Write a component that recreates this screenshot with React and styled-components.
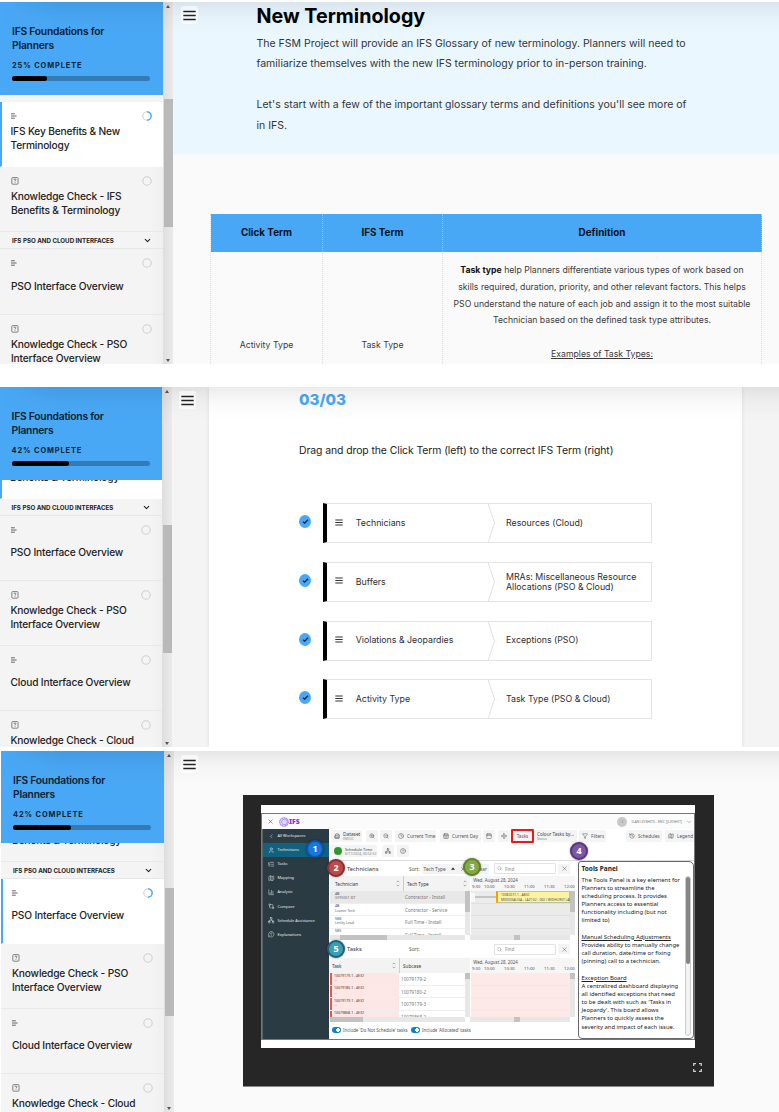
import React from "react";
import styled, { createGlobalStyle } from "styled-components";
import {
  X, ChevronDown, ChevronLeft, User, ListTree, Map as MapIcon, ChartColumn, GitCompare, Network,
  MessageCircleQuestion, ZoomIn, ZoomOut, Clock, CalendarDays, Calendar, Move, Funnel, Search,
  Building2, CircleQuestionMark, History,
} from "lucide-react";

const Global = createGlobalStyle`
  *, *::before, *::after { box-sizing: border-box; }
  body { margin: 0; background: #fff; font-family: Inter, "Liberation Sans", sans-serif; color: #111; }
  p, h1, h2, h3 { margin: 0; }
  svg { display: block; flex: none; }
`;

const BLUE = "#49a8f5";

const Page = styled.main`
  width: 779px;
  height: 1112px;
  overflow: hidden;
  padding-top: 2px;
`;

const Panel = styled.section`
  position: relative;
  display: flex;
  height: ${(p) => p.$h}px;
  margin-left: ${(p) => p.$left || 0}px;
  margin-bottom: ${(p) => p.$gap || 0}px;
  overflow: hidden;
  &::after {
    content: "";
    position: absolute;
    inset: 0 0 auto 0;
    height: 32px;
    pointer-events: none;
    background: linear-gradient(rgba(0, 0, 0, 0.075), rgba(0, 0, 0, 0.025) 45%, transparent);
    mask-image: linear-gradient(90deg, transparent, #000 60px);
  }
`;

/* ---------- course sidebar ---------- */

const SidebarBox = styled.aside`
  flex: none;
  width: ${(p) => p.$w}px;
  display: flex;
  flex-direction: column;
  background: #f4f4f4;
`;

const CourseHeader = styled.header`
  flex: none;
  height: ${(p) => p.$h}px;
  padding: 22px 0 0 ${(p) => p.$pad}px;
  background: ${BLUE};
`;

const CourseTitle = styled.h2`
  font-size: 10.3px;
  line-height: 14px;
  font-weight: 600;
  letter-spacing: -0.22px;
  color: #0d2233;
`;

const Complete = styled.p`
  margin-top: 9px;
  font-size: 7.4px;
  line-height: 9px;
  font-weight: 700;
  letter-spacing: 0.9px;
  color: #0d2233;
`;

const Track = styled.div`
  width: 138px;
  height: 5px;
  margin-top: ${(p) => p.$mt}px;
  border-radius: 3px;
  background: #357bb3;
`;

const Bar = styled.div`
  width: ${(p) => p.$v}%;
  height: 100%;
  border-radius: 3px;
  background: #000;
`;

const LessonScroll = styled.div`
  flex: 1;
  overflow: hidden;
`;

const LessonList = styled.div`
  margin-top: ${(p) => p.$shift}px;
  background: linear-gradient(90deg, transparent 150px, rgba(0, 0, 0, 0.02));
`;

const Lesson = styled.div`
  height: 65.2px;
  padding: 9px 11px 0 ${(p) => (p.$active ? p.$pad - 3.5 : p.$pad - 1)}px;
  background: ${(p) => (p.$active ? "#fff" : "transparent")};
  border-left: ${(p) => (p.$active ? `2.5px solid ${BLUE}` : "0")};
  border-bottom: 1px solid ${(p) => (p.$active ? "#fff" : "#e8e8e8")};
`;

const LessonMeta = styled.div`
  display: flex;
  align-items: center;
  justify-content: space-between;
  height: 10px;
`;

const LessonTitle = styled.div`
  display: flex;
  align-items: center;
  height: 28px;
  margin-top: 3.3px;
  font-size: 10.2px;
  line-height: 14px;
  font-weight: 500;
  letter-spacing: -0.17px;
  color: #222;
  white-space: pre-line;
`;

const SectionRow = styled.div`
  display: flex;
  align-items: center;
  justify-content: space-between;
  height: 17px;
  padding: 1px 11px 0 ${(p) => p.$pad}px;
  border-bottom: 1px solid #e6e6e6;
  font-size: 6.2px;
  font-weight: 700;
  color: #222;
`;

const ScrollTrack = styled.div`
  flex: none;
  width: 10px;
  display: flex;
  flex-direction: column;
  align-items: center;
  background: linear-gradient(90deg, #dedede, #ebebeb);
`;

const ScrollThumb = styled.div`
  width: 9px;
  height: 128px;
  margin-top: ${(p) => p.$top}px;
  background: #b9b9b9;
`;

const Arrow = styled.i`
  width: 0;
  height: 0;
  border: 2.5px solid transparent;
  border-top-width: ${(p) => (p.$down ? "3px" : "0")};
  border-bottom-width: ${(p) => (p.$down ? "0" : "3px")};
  border-${(p) => (p.$down ? "top" : "bottom")}-color: #555;
  margin-top: ${(p) => (p.$down ? "auto" : "3px")};
  margin-bottom: ${(p) => (p.$down ? "2px" : "0")};
`;

const Menu = styled.button`
  position: absolute;
  left: ${(p) => p.$x}px;
  top: 4px;
  width: 17px;
  height: 18px;
  padding: 0;
  border: 0;
  border-radius: 2px;
  background: rgba(255, 255, 255, 0.6);
  display: grid;
  place-items: center;
  z-index: 1;
`;

function MenuButton({ x }) {
  return (
    <Menu $x={x}>
      <svg width="13" height="11" viewBox="0 0 13 11" stroke="#222" strokeWidth="1.3">
        <path d="M0.3 1.5h12.4M0.3 5.5h12.4M0.3 9.5h12.4" />
      </svg>
    </Menu>
  );
}

const TextIcon = () => (
  <svg width="7" height="6" viewBox="0 0 7 6" stroke="#555" strokeWidth="0.9">
    <path d="M0 0.8h3.8M0 3h5.6M0 5.2h3.8" />
  </svg>
);

const QuizIcon = () => (
  <svg width="8" height="8" viewBox="0 0 8 8" fill="none" stroke="#666" strokeWidth="0.8">
    <rect x="0.8" y="0.6" width="6.2" height="6.6" rx="0.8" />
    <path d="M2.9 3q0-1 1-1t1 .9q0 .6-.9 1v.5M4 5.3v.7" />
  </svg>
);

const Ring = ({ active }) => (
  <svg width="10" height="10" viewBox="0 0 10 10" fill="none" strokeWidth="1.1">
    <circle cx="5" cy="5" r="4.2" stroke="#cfcfcf" />
    {active && <path d="M5 0.8a4.2 4.2 0 0 1 0 8.4" stroke={BLUE} strokeWidth="1.3" />}
  </svg>
);

function Sidebar({ w, pad, headerH, percent, shift, thumb, lessons }) {
  return (
    <>
      <SidebarBox $w={w}>
        <CourseHeader $h={headerH} $pad={pad}>
          <CourseTitle>IFS Foundations for<br />Planners</CourseTitle>
          <Complete>{percent}% COMPLETE</Complete>
          <Track $mt={headerH === 93 ? 6.4 : 6}><Bar $v={percent} /></Track>
        </CourseHeader>
        <LessonScroll>
          <LessonList $shift={shift}>
            {lessons.map((l, i) =>
              l.section ? (
                <SectionRow key={i} $pad={pad}>
                  {l.section}
                  <ChevronDown size={9} strokeWidth={2.8} />
                </SectionRow>
              ) : (
                <Lesson key={i} $active={l.active} $pad={pad}>
                  <LessonMeta>
                    {l.quiz ? <QuizIcon /> : <TextIcon />}
                    <Ring active={l.active} />
                  </LessonMeta>
                  <LessonTitle>{l.title}</LessonTitle>
                </Lesson>
              )
            )}
          </LessonList>
        </LessonScroll>
      </SidebarBox>
      <ScrollTrack>
        <Arrow />
        <ScrollThumb $top={thumb - 6} />
        <Arrow $down />
      </ScrollTrack>
    </>
  );
}

const SECTION = { section: "IFS PSO AND CLOUD INTERFACES" };
const KEY = { title: "IFS Key Benefits & New\nTerminology" };
const KC_IFS = { title: "Knowledge Check - IFS\nBenefits & Terminology", quiz: true };
const PSO = { title: "PSO Interface Overview" };
const KC_PSO = { title: "Knowledge Check - PSO\nInterface Overview", quiz: true };
const CLOUD = { title: "Cloud Interface Overview" };
const KC_CLOUD = { title: "Knowledge Check - Cloud\nInterface Overview", quiz: true };
const on = (l) => ({ ...l, active: true });

/* ---------- terminology lesson ---------- */

const Content = styled.div`
  flex: 1;
  min-width: 0;
  background: ${(p) => p.$bg};
`;

const Hero = styled.div`
  height: 151.5px;
  padding: 2px 0 0 83.5px;
  background: #ebf7ff;
`;

const HeroTitle = styled.h1`
  font-size: 19.7px;
  line-height: 24px;
  font-weight: 700;
  color: #000;
`;

const HeroText = styled.p`
  margin-top: 5.8px;
  font-size: 10.5px;
  line-height: 20.45px;
  color: #313537;
  white-space: nowrap;
`;

const TermTable = styled.div`
  display: grid;
  grid-template-columns: 112px 120px 319px;
  width: 552px;
  margin: 60.5px 0 0 37px;
  border-left: 1px dotted #ddd;
`;

const TermHead = styled.div`
  height: 38px;
  line-height: 37px;
  background: ${BLUE};
  border-right: 1px dotted #8ec8f8;
  text-align: center;
  font-size: 9.85px;
  font-weight: 700;
  color: #04121e;
`;

const TermCell = styled.div`
  height: 112px;
  padding-top: ${(p) => p.$top}px;
  border-right: 1px dotted #ddd;
  text-align: center;
  font-size: 8.7px;
  line-height: 16.75px;
  color: #3a3a3a;
  white-space: nowrap;
  b { color: #111; }
`;

/* ---------- matching quiz ---------- */

const QuizCard = styled.div`
  width: 533px;
  height: 100%;
  margin-left: 37px;
  padding: 4px 0 0 90px;
  background: #fff;
  box-shadow: 0 0 4px rgba(0, 0, 0, 0.1);
`;

const Counter = styled.h3`
  font-size: 15.2px;
  line-height: 18px;
  font-weight: 800;
  color: ${BLUE};
`;

const Prompt = styled.p`
  margin-top: 34px;
  font-size: 10.4px;
  line-height: 15px;
  letter-spacing: -0.07px;
  color: #222;
`;

const Matches = styled.div`
  display: flex;
  flex-direction: column;
  gap: 18.7px;
  margin-top: 45.2px;
`;

const Match = styled.div`
  display: flex;
  align-items: center;
  height: 40px;
`;

const CheckDot = styled.span`
  display: grid;
  place-items: center;
  width: 12px;
  height: 13px;
  margin: 0 12px 3px 0;
  border-radius: 50%;
  background: ${BLUE};
`;

const MatchBox = styled.div`
  display: flex;
  align-items: center;
  width: 329px;
  height: 40px;
  border: 1px solid #e3e3e3;
  border-left: 4px solid #000;
  font-size: 8.8px;
  line-height: 10.3px;
  color: #2e2e2e;
`;

const MatchTerm = styled.div`
  display: flex;
  align-items: center;
  gap: 12.5px;
  width: 160.5px;
  padding-left: 8.3px;
`;

const MatchAnswer = styled.div`
  padding-left: 11.5px;
  white-space: pre-line;
`;

const MATCHES = [
  ["Technicians", "Resources (Cloud)"],
  ["Buffers", "MRAs: Miscellaneous Resource\nAllocations (PSO & Cloud)"],
  ["Violations & Jeopardies", "Exceptions (PSO)"],
  ["Activity Type", "Task Type (PSO & Cloud)"],
];

/* ---------- scheduling workbench slide ---------- */

const Stage = styled.div`
  width: 471px;
  height: 292px;
  margin: 44px 0 0 69px;
  padding: 10px 0 0 18px;
  background: #262626;
  border-bottom: 1px solid #888;
`;

const Slide = styled.div`
  width: 434px;
  height: 243px;
  padding: 8px 0 0 0;
  background: #fff;
`;

const Workbench = styled.div`
  position: relative;
  width: 434px;
  height: 227px;
  border: 1px solid #777;
  background: #fff;
  font-family: "Noto Sans", "Open Sans", sans-serif;
  font-size: 4.8px;
  line-height: 6px;
  color: #555;
  white-space: nowrap;
`;

const TopBar = styled.div`
  display: flex;
  align-items: center;
  height: 15px;
  padding: 0 2px 0 5px;
  background: #fbfbfb;
  color: #444;
`;

const Brand = styled.span`
  display: flex;
  align-items: center;
  margin-left: 5px;
  font: 900 6.9px/8px "Noto Sans", sans-serif;
  color: #8a35d8;
`;

const Account = styled.span`
  display: flex;
  align-items: center;
  gap: 4px;
  margin-left: auto;
  font-size: 3.5px;
  color: #777;
`;

const Avatar = styled.span`
  width: 10px;
  height: 10px;
  border-radius: 50%;
  background: #c8c8c8;
  text-align: center;
  line-height: 10px;
`;

const Split = styled.div`
  display: flex;
  height: 210px;
`;

const Nav = styled.nav`
  flex: none;
  width: 67px;
  background: #2b3b43;
  border-left: 1px solid #566;
`;

const NavItem = styled.div`
  display: flex;
  align-items: center;
  gap: 3px;
  height: 14.1px;
  padding-left: 5px;
  background: ${(p) => (p.$on ? "#14617f" : "transparent")};
  color: #e4ebee;
  font-size: 3.95px;
`;

const Main = styled.div`
  flex: 1;
  min-width: 0;
`;

const Tools = styled.div`
  display: flex;
  height: 12px;
  margin-top: ${(p) => p.$mt}px;
`;

const Tool = styled.div`
  display: flex;
  align-items: center;
  justify-content: ${(p) => (p.$text ? "flex-start" : "center")};
  gap: 3px;
  flex: none;
  width: ${(p) => p.$w}px;
  height: ${(p) => (p.$hot ? 14 : 12)}px;
  margin: ${(p) => (p.$hot ? "-1px" : "0")} 0 0 ${(p) => p.$ml}px;
  padding-left: ${(p) => (p.$text ? 3 : 0)}px;
  border: ${(p) => (p.$hot ? "2px solid #f01818" : "0")};
  border-radius: 1px;
  background: #f4f4f4;
  color: #555;
  font-size: 4.6px;
`;

const Stack = styled.span`
  display: flex;
  flex-direction: column;
  font-size: ${(p) => p.$fs || 4.8}px;
  line-height: 5px;
  color: #444;
  small { font-size: 3.4px; line-height: 4px; color: #888; }
`;

const Green = styled.i`
  flex: none;
  width: 8px;
  height: 8px;
  border-radius: 50%;
  background: #2d9a2d;
`;

const Work = styled.div`
  display: flex;
  height: 179px;
  margin-top: 3px;
  border-top: 1px solid #ddd;
`;

const Panes = styled.div`
  width: 249px;
`;

const PaneBar = styled.div`
  display: flex;
  align-items: center;
  height: ${(p) => p.$h}px;
  padding-left: 18px;
`;

const PaneName = styled.span`
  width: 62px;
  font-size: 5.8px;
  color: #333;
`;

const SortBox = styled.span`
  display: flex;
  align-items: center;
  justify-content: space-between;
  width: 67.5px;
  height: 10px;
  margin-left: 2px;
  padding: 0 2px;
  background: ${(p) => (p.$on ? "#f3f3f3" : "transparent")};
`;

const FindBox = styled.span`
  display: flex;
  align-items: center;
  gap: 3px;
  width: 62px;
  height: 11px;
  margin-left: 5px;
  padding-left: 2px;
  border: 1px solid #e2e2e2;
  border-radius: 1px;
  font-size: 4.6px;
  color: #888;
`;

const ClearBox = styled.span`
  display: grid;
  place-items: center;
  width: 12px;
  height: 10px;
  margin-left: 2px;
  background: #f4f4f4;
  color: #555;
`;

const Grid = styled.div`
  display: grid;
  grid-template-columns: 135px 5px 100px 5px;
  grid-template-rows: 15px 43.5px 5.5px;
  margin-left: 1px;
`;

const HeadCells = styled.div`
  grid-column: 1 / 3;
  display: flex;
  align-items: center;
  background: #f3f3f3;
`;

const HeadCell = styled.div`
  display: flex;
  align-items: center;
  justify-content: space-between;
  width: ${(p) => p.$w}px;
  height: 15px;
  padding: 0 3px 0 ${(p) => p.$pl}px;
  border-left: ${(p) => (p.$line ? "1px solid #ccc" : "0")};
  font-size: 4.7px;
  color: #333;
`;

const Timeline = styled.div`
  grid-column: 3 / 5;
  margin-left: 1px;
  padding: 1px 0 0 1px;
  background: #f6f6f6;
  font-size: 4.4px;
  line-height: 6.6px;
`;

const Ticks = styled.div`
  display: grid;
  grid-template-columns: 12px repeat(4, 20px) 12px;
  font-size: 4.2px;
`;

const Rows = styled.div`
  height: 43.5px;
  overflow: hidden;
`;

const Row = styled.div`
  display: flex;
  height: 12.6px;
  background: ${(p) => (p.$on ? "#e8e8e8" : "#fff")};
  border-bottom: 1px solid #eee;
`;

const Who = styled.div`
  width: ${(p) => p.$w}px;
  padding: 0.5px 0 0 ${(p) => (p.$late ? 2 : 5)}px;
  background: ${(p) => (p.$late ? "#fde7e6" : "transparent")};
  border-left: ${(p) => (p.$late ? "2px solid #ef5350" : "0")};
  font-size: 3.5px;
  line-height: 4.6px;
  color: #666;
  b { display: block; color: #555; font-weight: 500; }
`;

const Kind = styled.div`
  padding-left: 2px;
  font-size: 4.6px;
  line-height: 12px;
  color: #777;
`;

const Scroller = styled.div`
  padding: ${(p) => (p.$wide ? `0 0 0 ${p.$at}px` : "0")};
  background: #e7e7e7;
  &::before {
    content: "";
    display: block;
    width: ${(p) => (p.$wide ? `${p.$size}px` : "100%")};
    height: ${(p) => (p.$wide ? "100%" : `${p.$size}px`)};
    background: #c2c2c2;
  }
`;

const Gantt = styled.div`
  margin-left: 1px;
  background: repeating-linear-gradient(
    ${(p) => (p.$late ? "#fde9e8 0 11.6px, #fbe5e3 11.6px 12.6px" : "#ebebeb 0 11.6px, #dfdfdf 11.6px 12.6px")}
  );
`;

const GanttLine = styled.div`
  display: flex;
  align-items: center;
  height: 12px;
`;

const Travel = styled.i`
  width: 25px;
  height: 9px;
  border-left: 4px solid #f8f8f8;
  background: linear-gradient(transparent 3px, #c4c4c4 3px 5px, transparent 5px);
`;

const TaskBar = styled.div`
  flex: 1;
  min-width: 0;
  height: 12px;
  padding: 1px 0 0 3px;
  border: 1px solid #bcc59a;
  border-left: 2px solid #f5a300;
  background: #fcf3a2;
  font-size: 3.25px;
  line-height: 4.6px;
  color: #555;
`;

const Toggles = styled.div`
  display: flex;
  align-items: center;
  height: 16px;
  padding-left: 3px;
  font-size: 4.4px;
`;

const Toggle = styled.i`
  width: 9px;
  height: 6px;
  margin-right: 2px;
  border-radius: 3px;
  background: radial-gradient(circle at 6px 3px, #fff 1.7px, #0b84c6 2px);
`;

const ToggleText = styled.span`
  width: ${(p) => p.$w}px;
`;

const Notes = styled.aside`
  display: flex;
  width: 116px;
  height: 178px;
  padding: 2px 2px 0 2.5px;
  border: 1px solid #666;
  border-radius: 3px 5px 4px 4px;
  background: #fff;
`;

const NotesText = styled.div`
  flex: 1;
  width: 104px;
  font-size: 5.9px;
  line-height: 8.16px;
  color: #222;
  h4 { margin: 0 0 2.7px; font-size: 6.5px; font-weight: 700; line-height: 9px; }
  u { display: block; margin-top: 8.16px; text-decoration-thickness: 0.5px; text-underline-offset: 1px; }
`;

const NotesScroll = styled.div`
  flex: none;
  width: 6px;
  height: 160px;
  margin-top: 12px;
  border: 1px solid #ccc;
  border-radius: 3px;
  background: #f3f3f3;
  &::before {
    content: "";
    display: block;
    height: 87px;
    border-radius: 2px;
    background: #858585;
  }
`;

const Badge = styled.span`
  position: absolute;
  left: ${(p) => p.$x}px;
  top: ${(p) => p.$y}px;
  width: 18px;
  height: 18px;
  border: 2px solid ${(p) => p.$edge};
  border-radius: 50%;
  background: ${(p) => p.$fill};
  box-shadow: 0 0 2px rgba(0, 0, 0, 0.45);
  color: #fff;
  font-size: 9px;
  font-weight: 700;
  line-height: 13.5px;
  text-align: center;
`;

const Corner = styled.div`
  display: flex;
  justify-content: flex-end;
  padding: 15px 12px 0 0;
`;

const NAV = [
  [ChevronLeft, "All Workspaces"],
  [User, "Technicians"],
  [ListTree, "Tasks"],
  [MapIcon, "Mapping"],
  [ChartColumn, "Analysis"],
  [GitCompare, "Compare"],
  [Network, "Schedule Assistance"],
  [MessageCircleQuestion, "Explanations"],
];

const SortMark = () => (
  <svg width="4" height="7" viewBox="0 0 4 7" fill="none" stroke="#777" strokeWidth="0.6">
    <path d="M0.7 2.2 2 0.9l1.3 1.3M0.7 4.8 2 6.1l1.3-1.3" />
  </svg>
);

const Logo = () => (
  <svg width="10" height="10" viewBox="0 0 10 10" fill="none">
    <circle cx="5" cy="5" r="4.2" stroke="#b184e8" strokeWidth="1.3" strokeDasharray="1.6 .3" />
    <circle cx="5.4" cy="5" r="2.9" fill="#e2d6f7" stroke="#9a94ea" strokeWidth="0.9" />
  </svg>
);

function PaneHeader({ h, name, sort }) {
  return (
    <PaneBar $h={h}>
      <PaneName>{name}</PaneName>
      Sort:
      <SortBox $on={!!sort}>
        {sort && (
          <>
            <span>{sort}</span>
            <svg width="4" height="3" viewBox="0 0 4 3"><path d="M2 0.4 4 2.8H0z" fill="#222" /></svg>
            <X size={6} />
            <span />
            <span>Clear</span>
          </>
        )}
      </SortBox>
      <FindBox><Search size={5} /> Find</FindBox>
      <ClearBox><X size={7} strokeWidth={1.6} /></ClearBox>
    </PaneBar>
  );
}

function Times() {
  return (
    <Timeline>
      &nbsp;Wed, August 28, 2024
      <Ticks>
        {["9:30", "10:00", "10:30", "11:00", "11:30", "12:00"].map((t) => <span key={t}>{t}</span>)}
      </Ticks>
    </Timeline>
  );
}

function SchedulingWorkbench() {
  return (
    <Workbench>
      <TopBar>
        <X size={7} strokeWidth={2} />
        <Brand><Logo />IFS</Brand>
        <Account><Avatar>I</Avatar>ILAN LIVSHITS - ENC [JLIVSHIT] <ChevronDown size={6} /></Account>
      </TopBar>
      <Split>
        <Nav>
          {NAV.map(([Icon, label], i) => (
            <NavItem key={label} $on={i === 1}><Icon size={6.5} strokeWidth={1.8} />{label}</NavItem>
          ))}
        </Nav>
        <Main>
          <Tools $mt={1}>
            <Tool $w={31} $ml={2} $text><Building2 size={6} /><Stack>Dataset<small>INDUC</small></Stack></Tool>
            <Tool $w={12} $ml={4}><ZoomIn size={6} /></Tool>
            <Tool $w={12} $ml={2}><ZoomOut size={6} /></Tool>
            <Tool $w={41} $ml={3} $text><Clock size={6} />Current Time</Tool>
            <Tool $w={41} $ml={4} $text><CalendarDays size={6} />Current Day</Tool>
            <Tool $w={12} $ml={2}><Calendar size={6} /></Tool>
            <Tool $w={12} $ml={3}><Move size={6} /></Tool>
            <Tool $w={23} $ml={1} $hot>Tasks</Tool>
            <Tool $w={43} $ml={0} $text><Stack $fs={4.6}>Colour Tasks by...<small>Status</small></Stack></Tool>
            <Tool $w={27} $ml={2} $text><Funnel size={6} />Filters</Tool>
            <Tool $w={36} $ml={20} $text><History size={6} />Schedules</Tool>
            <Tool $w={29} $ml={3} $text><MapIcon size={6} />Legend</Tool>
          </Tools>
          <Tools $mt={3}>
            <Tool $w={46} $ml={2} $text><Green /><Stack $fs={4}>Schedule Time<small>6/11/2024, 00:52:52</small></Stack></Tool>
            <Tool $w={12} $ml={5}><Network size={6} /></Tool>
            <Tool $w={12} $ml={3}><CircleQuestionMark size={6} /></Tool>
          </Tools>
          <Work>
            <Panes>
              <PaneHeader h={15} name="Technicians" sort="Tech Type" />
              <Grid>
                <HeadCells>
                  <HeadCell $w={73} $pl={5}>Technician<SortMark /></HeadCell>
                  <HeadCell $w={67} $pl={3} $line>Tech Type<SortMark /></HeadCell>
                </HeadCells>
                <Times />
                <Rows>
                  <Row $on><Who $w={73}><b>4B</b>GTF50K1 SIT</Who><Kind>Contractor - Install</Kind></Row>
                  <Row><Who $w={73}><b>4B</b>Loaner Tech</Who><Kind>Contractor - Service</Kind></Row>
                  <Row><Who $w={73}><b>5KK</b>Lesley Lead</Who><Kind>Full Time - Install</Kind></Row>
                  <Row><Who $w={73}><b>5K5</b></Who><Kind>Full Time - Install</Kind></Row>
                </Rows>
                <Scroller $size={21} />
                <Gantt>
                  <GanttLine>
                    <Travel />
                    <TaskBar>10082077-1 - AB32<br />MISSISSAUGA - LAZ1G2 - 060 \ WIDHURST LAN</TaskBar>
                  </GanttLine>
                </Gantt>
                <Scroller $size={21} />
                <Scroller $wide $at={10} $size={47} />
                <span />
                <Scroller $wide $at={44} $size={6} />
              </Grid>
              <PaneHeader h={18} name="Tasks" />
              <Grid>
                <HeadCells>
                  <HeadCell $w={69} $pl={2}>Task<SortMark /></HeadCell>
                  <HeadCell $w={71} $pl={3} $line>Subcase</HeadCell>
                </HeadCells>
                <Times />
                <Rows>
                  {["10079179-2", "10079180-2", "10079179-3", "10079868-2"].map((id, i) => (
                    <Row key={i}>
                      <Who $w={69} $late><b>{id.slice(0, 8)}-1 - 4E32</b>...</Who>
                      <Kind>{id}</Kind>
                    </Row>
                  ))}
                </Rows>
                <Scroller $size={6} />
                <Gantt $late />
                <Scroller $size={6} />
                <Scroller $wide $at={0} $size={33} />
                <span />
                <Scroller $wide $at={44} $size={6} />
              </Grid>
              <Toggles>
                <Toggle /><ToggleText $w={68}>Include 'Do Not Schedule' tasks</ToggleText>
                <Toggle /><ToggleText $w={60}>Include 'Allocated' tasks</ToggleText>
              </Toggles>
            </Panes>
            <Notes>
              <NotesText>
                <h4>Tools Panel</h4>
                The Tools Panel is a key element for<br />Planners to streamline the<br />
                scheduling process. It provides<br />Planners access to essential<br />
                functionality including (but not<br />limited to)
                <u>Manual Scheduling Adjustments</u>
                Provides ability to manually change<br />call duration, date/time or fixing<br />
                (pinning) call to a technician.
                <u>Exception Board</u>
                A centralized dashboard displaying<br />all identified exceptions that need<br />
                to be dealt with such as 'Tasks in<br />Jeopardy'. This board allows<br />
                Planners to quickly assess the<br />severity and impact of each issue.
              </NotesText>
              <NotesScroll />
            </Notes>
          </Work>
        </Main>
      </Split>
      <Badge $x={44} $y={26} $fill="#1878dc" $edge="#0d55a8">1</Badge>
      <Badge $x={65} $y={45} $fill="#bd4a4a" $edge="#8c2f33">2</Badge>
      <Badge $x={201} $y={44} $fill="#85aa45" $edge="#5f8428">3</Badge>
      <Badge $x={308} $y={28} $fill="#7d57a4" $edge="#553580">4</Badge>
      <Badge $x={65} $y={126} $fill="#3a9eb5" $edge="#1f6377">5</Badge>
    </Workbench>
  );
}

export default function App() {
  return (
    <>
      <Global />
      <Page>
        <Panel $h={361.5} $gap={23.5}>
          <Sidebar w={163} pad={12} headerH={93} percent={25} shift={7} thumb={96.5}
            lessons={[on(KEY), KC_IFS, SECTION, PSO, KC_PSO]} />
          <MenuButton x={181} />
          <Content $bg="#fafafa">
            <Hero>
              <HeroTitle>New Terminology</HeroTitle>
              <HeroText>
                The FSM Project will provide an IFS Glossary of new terminology. Planners will need to<br />
                familiarize themselves with the new IFS terminology prior to in-person training.<br />
                <br />
                Let's start with a few of the important glossary terms and definitions you'll see more of<br />
                in IFS.
              </HeroText>
            </Hero>
            <TermTable>
              <TermHead>Click Term</TermHead>
              <TermHead>IFS Term</TermHead>
              <TermHead>Definition</TermHead>
              <TermCell $top={85.3}>Activity Type</TermCell>
              <TermCell $top={85.3}>Task Type</TermCell>
              <TermCell $top={10}>
                <b>Task type</b> help Planners differentiate various types of work based on<br />
                skills required, duration, priority, and other relevant factors. This helps<br />
                PSO understand the nature of each job and assign it to the most suitable<br />
                Technician based on the defined task type attributes.<br />
                <br />
                <u>Examples of Task Types:</u>
              </TermCell>
            </TermTable>
          </Content>
        </Panel>

        <Panel $h={360} $gap={4}>
          <Sidebar w={162} pad={11.5} headerH={93} percent={42} shift={-46.7} thumb={138}
            lessons={[on(KC_IFS), SECTION, PSO, KC_PSO, CLOUD, KC_CLOUD]} />
          <MenuButton x={179} />
          <Content $bg="#f4f4f4">
            <QuizCard>
              <Counter>03/03</Counter>
              <Prompt>Drag and drop the Click Term (left) to the correct IFS Term (right)</Prompt>
              <Matches>
                {MATCHES.map(([term, answer]) => (
                  <Match key={term}>
                    <CheckDot>
                      <svg width="7" height="7" viewBox="0 0 7 7" fill="none" stroke="#123" strokeWidth="1.3">
                        <path d="M1 3.7 2.7 5.2 6 1.8" />
                      </svg>
                    </CheckDot>
                    <MatchBox>
                      <MatchTerm>
                        <svg width="8" height="9" viewBox="0 0 8 9" stroke="#333" strokeWidth="1.1">
                          <path d="M0.3 1h7.4M0.3 3.5h7.4M0.3 6h7.4" />
                        </svg>
                        {term}
                      </MatchTerm>
                      <svg width="7" height="38" viewBox="0 0 7 38" fill="none" stroke="#dcdcdc" strokeWidth="0.9">
                        <path d="M0.3 0 6.5 19 0.3 38" />
                      </svg>
                      <MatchAnswer>{answer}</MatchAnswer>
                    </MatchBox>
                  </Match>
                ))}
              </Matches>
            </QuizCard>
          </Content>
        </Panel>

        <Panel $h={361} $left={1}>
          <Sidebar w={163} pad={12} headerH={92} percent={42} shift={-46.7} thumb={137}
            lessons={[KC_IFS, SECTION, on(PSO), KC_PSO, CLOUD, KC_CLOUD]} />
          <MenuButton x={180} />
          <Content $bg="#fafafa">
            <Stage>
              <Slide>
                <SchedulingWorkbench />
              </Slide>
              <Corner>
                <svg width="9" height="9" viewBox="0 0 9 9" fill="none" stroke="#cfcfcf" strokeWidth="1.2">
                  <path d="M0.7 3V0.7H3M6 0.7h2.3V3M8.3 6v2.3H6M3 8.3H0.7V6" />
                </svg>
              </Corner>
            </Stage>
          </Content>
        </Panel>
      </Page>
    </>
  );
}
